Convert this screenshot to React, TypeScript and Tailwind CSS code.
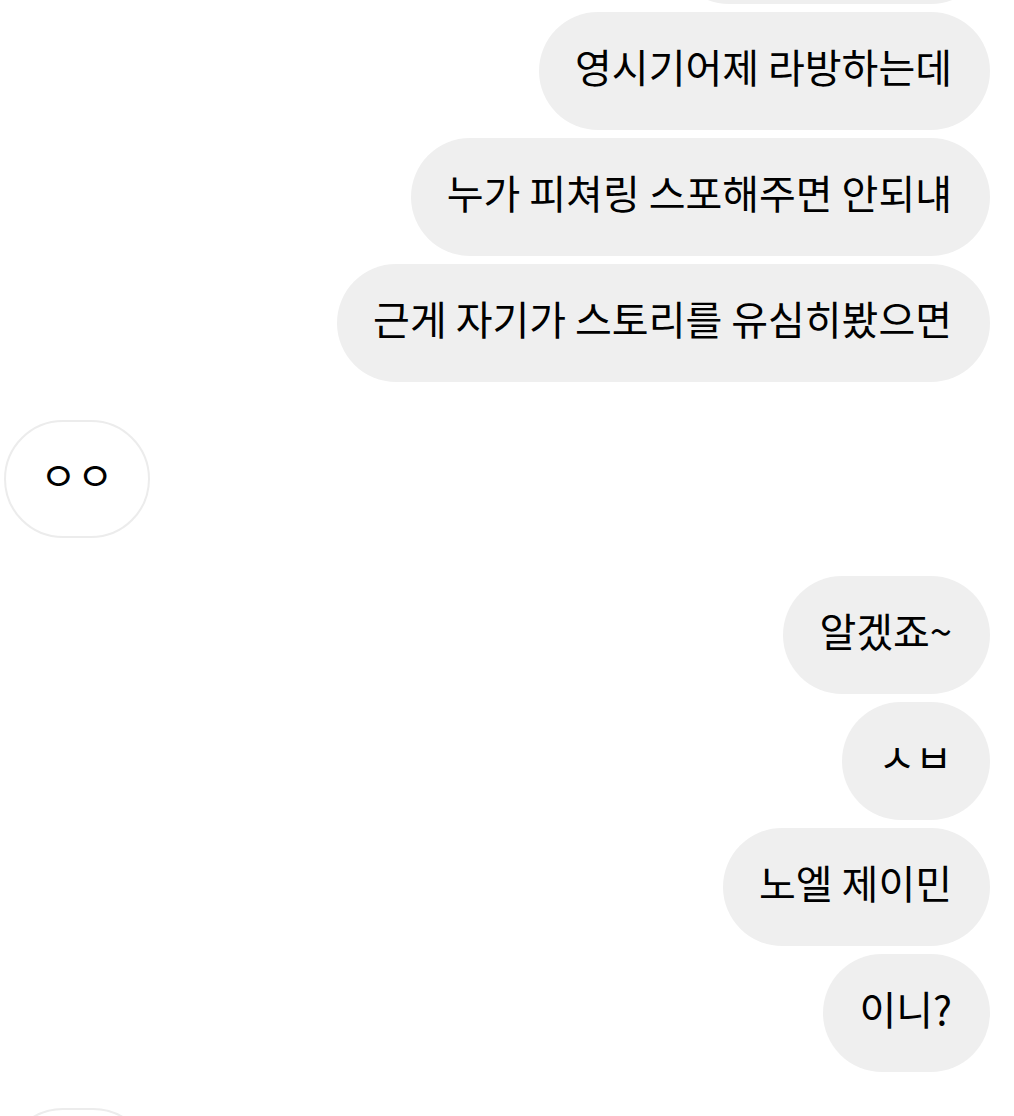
type Msg = { id: number; text: string; mine: boolean; gap?: string }

const messages: Msg[] = [
  { id: 1, text: '영시기어제 라방하는데', mine: true },
  { id: 2, text: '누가 피쳐링 스포해주면 안되냬', mine: true, gap: 'mt-2' },
  { id: 3, text: '근게 자기가 스토리를 유심히봤으면', mine: true, gap: 'mt-2' },
  { id: 4, text: 'ㅇㅇ', mine: false, gap: 'mt-[38px]' },
  { id: 5, text: '알겠죠~', mine: true, gap: 'mt-[38px]' },
  { id: 6, text: 'ㅅㅂ', mine: true, gap: 'mt-2' },
  { id: 7, text: '노엘 제이민', mine: true, gap: 'mt-2' },
  { id: 8, text: '이니?', mine: true, gap: 'mt-2' },
]

function Bubble({ msg }: { msg: Msg }) {
  if (msg.mine) {
    return (
      <div className={`flex justify-end ${msg.gap ?? ''}`}>
        <div className="h-[118px] pl-[36px] pr-[38px] pb-[10px] flex items-center rounded-full bg-[#efefef] text-black text-[40px] whitespace-nowrap">
          {msg.text}
        </div>
      </div>
    )
  }
  return (
    <div className={`flex justify-start ${msg.gap ?? ''}`}>
      <div className="h-[118px] px-[34px] pb-[10px] flex items-center rounded-full bg-white border-2 border-[#ececec] text-black text-[40px] whitespace-nowrap">
        {msg.text}
      </div>
    </div>
  )
}

export default function App() {
  return (
    <div
      className="w-[1014px] h-[1116px] overflow-hidden bg-white pl-[4px] pr-[24px]"
      style={{ fontFamily: '"Noto Sans CJK KR", "Noto Sans", sans-serif' }}
    >
      {/* previous message, mostly scrolled off */}
      <div className="flex justify-end -mt-[114px]">
        <div className="h-[118px] w-[320px] rounded-full bg-[#efefef]" />
      </div>
      <div className="mt-2">
        {messages.map((m) => (
          <Bubble key={m.id} msg={m} />
        ))}
      </div>
      {/* next incoming message, cut off at the bottom */}
      <div className="flex justify-start mt-[36px]">
        <div className="h-[118px] w-[148px] rounded-full bg-white border-2 border-[#ececec]" />
      </div>
    </div>
  )
}
